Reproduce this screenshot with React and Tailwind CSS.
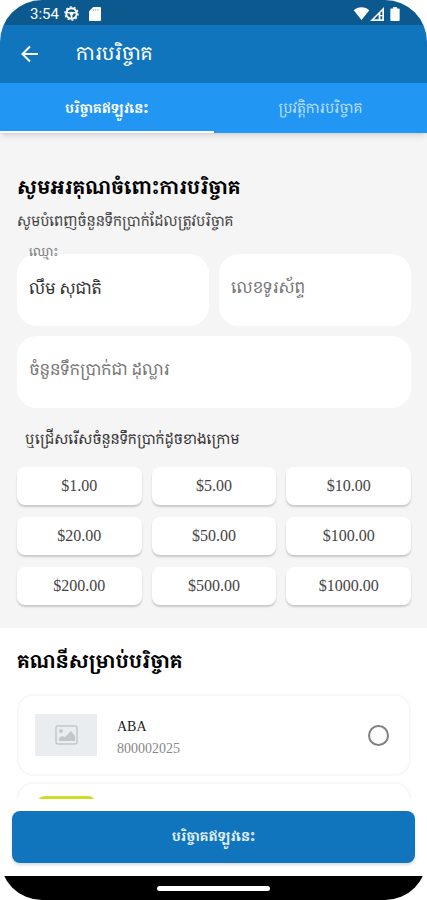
import React, { useState } from 'react'

const AMOUNTS = ['1.00', '5.00', '10.00', '20.00', '50.00', '100.00', '200.00', '500.00', '1000.00']

const fieldClass =
    'block w-full h-[72px] rounded-[20px] bg-white px-3 pb-1 text-base text-[#333] placeholder-[#777] outline-none focus:ring-1 focus:ring-[#1175be]'

function StatusBar() {
    return (
        <div className="flex h-[25px] shrink-0 items-center justify-between bg-[#0c598f] pl-[30px] pr-[27px] pt-0.5 text-white">
            <div className="flex items-center">
                <span className="font-['Roboto'] text-[15px] leading-5">3:54</span>
                <svg width="15" height="15" viewBox="0 0 16 16" className="ml-[5px]" fill="none" stroke="currentColor">
                    <circle cx="8" cy="8" r="5.6" strokeWidth="2" />
                    <circle cx="8" cy="8" r="7" strokeWidth="1.4" strokeDasharray="2.2 2.2" />
                    <path d="M3 7.200h10M8 8v5" strokeWidth="1.800" />
                    <circle cx="8" cy="8" r="2" fill="currentColor" stroke="none" />
                </svg>
                <svg width="12" height="14" viewBox="0 0 12 14" className="ml-2.5" fill="currentColor">
                    <path d="M4.2 0H11a1 1 0 0 1 1 1v12a1 1 0 0 1-1 1H1a1 1 0 0 1-1-1V4.2z" />
                    <path d="M4.500 2v2M6.700 2v2M8.900 2v2" stroke="#a9c3d6" strokeWidth="1" />
                </svg>
            </div>
            <div className="flex items-center">
                <svg width="17" height="13" viewBox="0 0 18 14" fill="currentColor">
                    <path d="M9 14 0.6 3.6C2.8 1.5 5.8.3 9 .3s6.200 1.200 8.400 3.300z" />
                </svg>
                <svg width="14" height="14" viewBox="0 0 14 14" fill="currentColor">
                    <path fillRule="evenodd" d="M14 0v14H0zM8.600 7.600 4 12.300h4.600z M10.400 5.800v2.200h1.900V3.900z M10.400 9.300v3h1.900v-3z" />
                </svg>
                <svg width="10" height="14" viewBox="0 0 10 15" className="ml-1.5" fill="currentColor">
                    <path d="M3 0h4v1.500h2a1 1 0 0 1 1 1V14a1 1 0 0 1-1 1H1a1 1 0 0 1-1-1V2.500a1 1 0 0 1 1-1h2z" />
                </svg>
            </div>
        </div>
    )
}

function Tab({ label, active, onClick }) {
    return (
        <button
            type="button"
            role="tab"
            aria-selected={active}
            onClick={onClick}
            className={`flex-1 border-b-2 pt-1 leading-5 ${
                active ? 'border-white text-[13px] font-bold text-white' : 'border-transparent text-sm text-[#b8defb]'
            }`}
        >
            {label}
        </button>
    )
}

function AccountCard({ id, children }) {
    return (
        <label
            htmlFor={id}
            className="flex h-[82px] cursor-pointer items-center rounded-2xl border-2 border-[#f7f7f7] bg-white pl-4 pr-5"
        >
            {children}
            <input
                id={id}
                type="radio"
                name="account"
                className="ml-auto size-[21px] appearance-none rounded-full border-2 border-[#808080] checked:border-[6px] checked:border-[#1175be]"
            />
        </label>
    )
}

function App() {
    const [tab, setTab] = useState('donate')
    const [name, setName] = useState('លឹម សុជាតិ')
    const [phone, setPhone] = useState('')
    const [amount, setAmount] = useState('')

    return (
        <div className="flex h-screen flex-col overflow-hidden rounded-[42px] bg-white font-['Liberation_Serif','Noto_Serif_Khmer','Khmer_OS',serif] text-[#222]">
            <StatusBar />

            {/* App bar */}
            <header className="flex h-[58px] shrink-0 items-center gap-9 bg-[#1175be] px-5 text-white">
                <button type="button" aria-label="Back">
                    <svg width="20" height="18" viewBox="0 0 20 18" fill="none" stroke="currentColor" strokeWidth="2">
                        <path d="M18 9H3M10 1.500 2.500 9l7.500 7.500" />
                    </svg>
                </button>
                <h1 className="text-[19px] leading-7">ការបរិច្ចាគ</h1>
            </header>

            <div role="tablist" className="z-10 flex h-[50px] shrink-0 bg-[#2196f3] shadow-md">
                <Tab label="បរិច្ចាគឥឡូវនេះ" active={tab === 'donate'} onClick={() => setTab('donate')} />
                <Tab label="ប្រវត្តិការបរិច្ចាគ" active={tab === 'history'} onClick={() => setTab('history')} />
            </div>

            {/* Content */}
            <main className="min-h-0 flex-1 overflow-y-auto [scrollbar-width:none]">
                <section className="bg-[#f5f5f5] pb-[23px] pl-[17px] pr-4 pt-[41px]">
                    <h2 className="text-[19px] font-bold leading-7 text-black">សូមអរគុណចំពោះការបរិច្ចាគ</h2>
                    <p className="mt-2.5 text-sm leading-5 text-[#444]">សូមបំពេញចំនួនទឹកប្រាក់ដែលត្រូវបរិច្ចាគ</p>

                    <div className="mt-[22px] grid grid-cols-2 gap-2.5">
                        <div className="relative">
                            <label htmlFor="name" className="absolute -top-3 left-3 text-xs leading-5 text-[#777]">
                                ឈ្មោះ
                            </label>
                            <input id="name" value={name} onChange={(e) => setName(e.target.value)} className={fieldClass} />
                        </div>
                        <input
                            aria-label="លេខទូរស័ព្ទ"
                            placeholder="លេខទូរស័ព្ទ"
                            value={phone}
                            onChange={(e) => setPhone(e.target.value)}
                            className={fieldClass}
                        />
                        <input
                            aria-label="ចំនួនទឹកប្រាក់ជា ដុល្លារ"
                            placeholder="ចំនួនទឹកប្រាក់ជា ដុល្លារ"
                            value={amount}
                            onChange={(e) => setAmount(e.target.value)}
                            className={`${fieldClass} col-span-2`}
                        />
                    </div>

                    <p className="mt-[22px] px-2 text-sm leading-5 text-[#333]">ឬជ្រើសរើសចំនួនទឹកប្រាក់ដូចខាងក្រោម</p>

                    <div className="mt-[17px] grid grid-cols-3 gap-x-2.5 gap-y-3">
                        {AMOUNTS.map((value) => (
                            <button
                                key={value}
                                type="button"
                                onClick={() => setAmount(value)}
                                className="h-[38px] rounded-lg bg-white text-base leading-5 text-[#444] shadow-[0_2px_2px_rgba(0,0,0,0.18)]"
                            >
                                ${value}
                            </button>
                        ))}
                    </div>
                </section>

                <section className="pl-[17px] pr-4 pt-5">
                    <h2 className="text-[19px] font-bold leading-7 text-black">គណនីសម្រាប់បរិច្ចាគ</h2>
                    <div className="mt-[18px] flex flex-col gap-1.5">
                        <AccountCard id="account-aba">
                            <span className="flex h-[42px] w-[62px] items-center justify-center bg-[#e9edf0]">
                                <svg width="23" height="20" viewBox="0 0 23 20" fill="none">
                                    <rect x="1" y="1" width="21" height="18" rx="2" stroke="#c3c7ca" strokeWidth="1.500" />
                                    <circle cx="6" cy="6" r="2" fill="#c3c7ca" />
                                    <path d="M4 16v-3l3-2 3 1 6-6 4 5v5z" fill="#c3c7ca" />
                                </svg>
                            </span>
                            <span className="ml-5 flex flex-col pt-1">
                                <span className="text-sm leading-6">ABA</span>
                                <span className="text-sm leading-5 text-[#888]">800002025</span>
                            </span>
                        </AccountCard>
                        <AccountCard id="account-second">
                            <span className="mx-0.5 h-[54px] w-[59px] rounded-lg bg-[#cddc29]" />
                        </AccountCard>
                    </div>
                </section>
            </main>

            {/* Submit */}
            <footer className="shrink-0 bg-white px-3 pb-[13px] pt-3">
                <button
                    type="button"
                    className="h-[52px] w-full rounded-lg bg-[#1175be] text-[13px] font-bold leading-5 text-[#e3f0fa] shadow-[0_2px_3px_rgba(0,0,0,0.15)]"
                >
                    បរិច្ចាគឥឡូវនេះ
                </button>
            </footer>
            <div className="flex h-6 shrink-0 items-center justify-center bg-black">
                <span className="h-[5px] w-[113px] rounded-full bg-white" />
            </div>
        </div>
    )
}

export default App
